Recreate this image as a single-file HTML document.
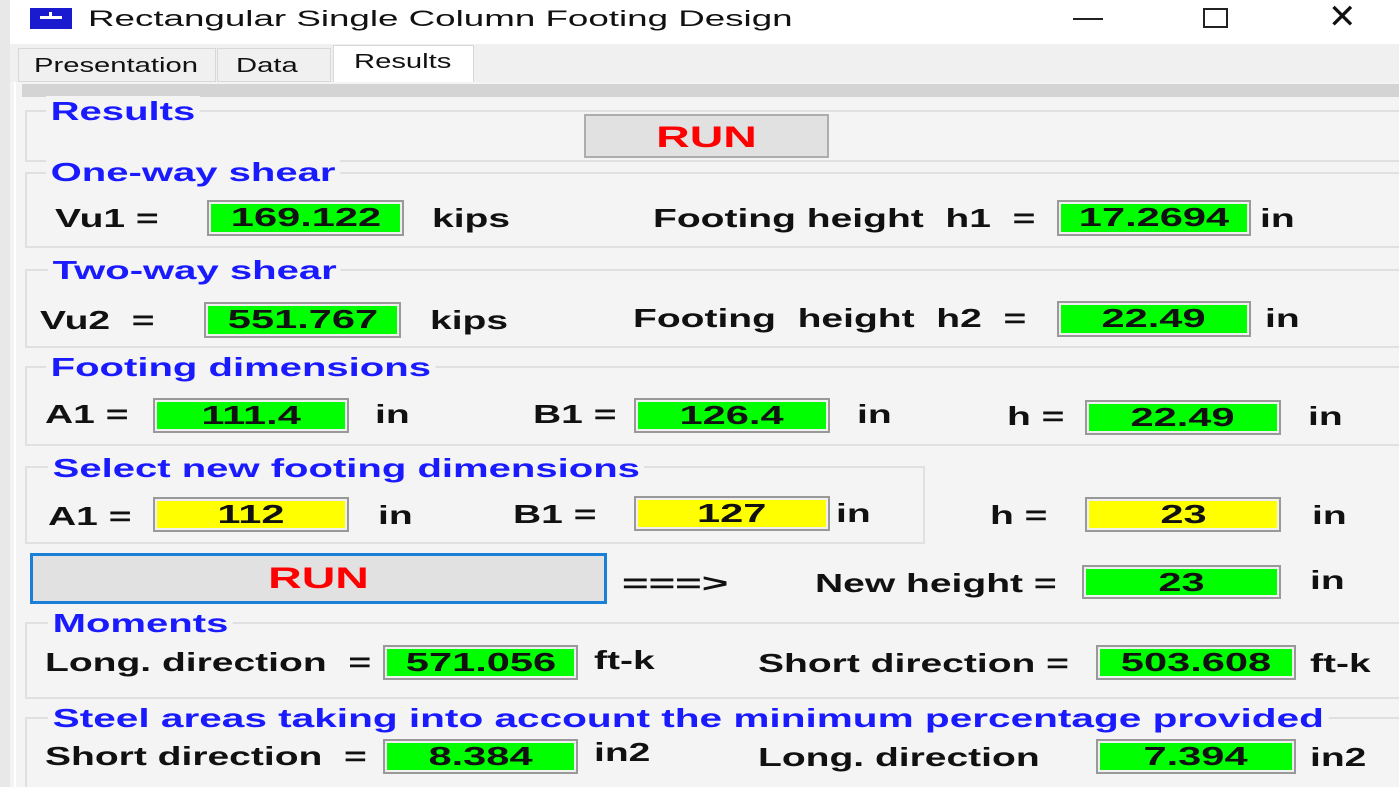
<!DOCTYPE html>
<html><head><meta charset="utf-8"><style>
*{margin:0;padding:0;box-sizing:border-box}
html,body{width:1399px;height:787px;overflow:hidden}
body{background:#f4f4f4;font-family:"Liberation Sans",Arial,sans-serif;position:relative}
.a{position:absolute}
.t{position:absolute;white-space:nowrap;font-weight:bold;font-size:26px;line-height:30px;transform-origin:left center;transform:scaleX(1.5);color:#111}
.h{color:#1a1aff;background:#f4f4f4;padding:0 3px;transform:scaleX(1.54)}
.g{position:absolute;border:2px solid #e0e0e0;}
.b{position:absolute;border:2px solid #999;box-shadow:inset 0 0 0 2px #f0f0f0;background:#00ff00;text-align:center;font-weight:bold;font-size:26px;line-height:31px;color:#111;overflow:hidden}
.b span{display:inline-block;transform:scaleX(1.6)}
.y{background:#ffff00}
</style></head><body>
<div class="a" style="left:0;top:0;width:1399px;height:44px;background:#fff"></div>
<div class="a" style="left:0;top:0;width:10px;height:787px;background:#e8e8e8"></div>
<div class="a" style="left:30px;top:8px;width:42px;height:21px;background:#1a1acf"></div>
<div class="a" style="left:40px;top:16px;width:22px;height:3px;background:#fff"></div>
<div class="a" style="left:49px;top:12px;width:3px;height:6px;background:#fff"></div>
<div class="t" style="left:88px;top:4px;font-weight:normal;font-size:22px;transform:scaleX(1.67);color:#111">Rectangular Single Column Footing Design</div>
<div class="a" style="left:1073px;top:18px;width:30px;height:2px;background:#222"></div>
<div class="a" style="left:1203px;top:8px;width:25px;height:20px;border:2px solid #222"></div>
<div class="t" style="left:1328px;top:2px;font-weight:normal;font-size:34px;transform:none">✕</div>
<div class="a" style="left:10px;top:44px;width:1389px;height:38px;background:#f0f0f0"></div>
<div class="a" style="left:18px;top:48px;width:198px;height:34px;border:1px solid #d8d8d8;background:#f0f0f0"></div>
<div class="a" style="left:217px;top:48px;width:114px;height:34px;border:1px solid #d8d8d8;background:#f0f0f0"></div>
<div class="a" style="left:333px;top:45px;width:141px;height:38px;border:1px solid #d8d8d8;border-bottom:none;background:#fff"></div>
<div class="t" style="left:34px;top:51px;font-weight:normal;font-size:20px;transform:scaleX(1.46)">Presentation</div>
<div class="t" style="left:236px;top:51px;font-weight:normal;font-size:20px;transform:scaleX(1.46)">Data</div>
<div class="t" style="left:354px;top:47px;font-weight:normal;font-size:20px;transform:scaleX(1.46)">Results</div>
<div class="a" style="left:14px;top:82px;width:1385px;height:705px;background:#f4f4f4;border-left:2px solid #fff"></div>
<div class="a" style="left:22px;top:84px;width:1377px;height:13px;background:#d4d4d4"></div>

<div class="g" style="left:25px;top:110px;width:1380px;height:52px"></div>
<div class="g" style="left:25px;top:172px;width:1380px;height:76px"></div>
<div class="g" style="left:25px;top:269px;width:1380px;height:79px"></div>
<div class="g" style="left:25px;top:366px;width:1380px;height:80px"></div>
<div class="g" style="left:25px;top:466px;width:900px;height:78px"></div>
<div class="g" style="left:25px;top:622px;width:1380px;height:77px"></div>
<div class="g" style="left:25px;top:717px;width:1380px;height:80px"></div>

<div class="t h" style="left:46px;top:96px">Results</div>
<div class="a" style="left:584px;top:114px;width:245px;height:44px;background:#e1e1e1;border:2px solid #adadad;text-align:center;color:#f00;font-weight:bold;font-size:30px;line-height:44px"><span style="display:inline-block;transform:scaleX(1.55)">RUN</span></div>

<div class="t h" style="left:46px;top:157px">One-way shear</div>
<div class="t" style="left:55px;top:203px">Vu1 =</div>
<div class="b" style="left:207px;top:200px;width:197px;height:36px"><span>169.122</span></div>
<div class="t" style="left:432px;top:203px">kips</div>
<div class="t" style="left:653px;top:203px">Footing height&nbsp; h1 &nbsp;=</div>
<div class="b" style="left:1057px;top:200px;width:194px;height:36px"><span>17.2694</span></div>
<div class="t" style="left:1260px;top:203px">in</div>

<div class="t h" style="left:48px;top:255px">Two-way shear</div>
<div class="t" style="left:40px;top:305px">Vu2&nbsp; =</div>
<div class="b" style="left:204px;top:302px;width:197px;height:36px"><span>551.767</span></div>
<div class="t" style="left:430px;top:305px">kips</div>
<div class="t" style="left:633px;top:303px">Footing&nbsp; height&nbsp; h2&nbsp; =</div>
<div class="b" style="left:1057px;top:301px;width:194px;height:36px"><span>22.49</span></div>
<div class="t" style="left:1265px;top:303px">in</div>

<div class="t h" style="left:46px;top:352px">Footing dimensions</div>
<div class="t" style="left:45px;top:399px">A1 =</div>
<div class="b" style="left:153px;top:398px;width:196px;height:35px"><span>111.4</span></div>
<div class="t" style="left:375px;top:399px">in</div>
<div class="t" style="left:533px;top:399px">B1 =</div>
<div class="b" style="left:634px;top:398px;width:196px;height:35px"><span>126.4</span></div>
<div class="t" style="left:857px;top:399px">in</div>
<div class="t" style="left:1007px;top:401px">h =</div>
<div class="b" style="left:1085px;top:400px;width:196px;height:35px"><span>22.49</span></div>
<div class="t" style="left:1308px;top:401px">in</div>

<div class="t h" style="left:48px;top:453px">Select new footing dimensions</div>
<div class="t" style="left:48px;top:501px">A1 =</div>
<div class="b y" style="left:153px;top:497px;width:196px;height:35px"><span>112</span></div>
<div class="t" style="left:378px;top:500px">in</div>
<div class="t" style="left:513px;top:499px">B1 =</div>
<div class="b y" style="left:634px;top:496px;width:196px;height:35px"><span>127</span></div>
<div class="t" style="left:836px;top:498px">in</div>
<div class="t" style="left:990px;top:500px">h =</div>
<div class="b y" style="left:1085px;top:497px;width:196px;height:35px"><span>23</span></div>
<div class="t" style="left:1312px;top:500px">in</div>

<div class="a" style="left:30px;top:553px;width:577px;height:51px;background:#e1e1e1;border:3px solid #1a7fd6;text-align:center;color:#f00;font-weight:bold;font-size:30px;line-height:45px"><span style="display:inline-block;transform:scaleX(1.55)">RUN</span></div>
<div class="t" style="left:622px;top:568px;transform:scaleX(1.75)">===&gt;</div>
<div class="t" style="left:815px;top:568px">New height =</div>
<div class="b" style="left:1082px;top:565px;width:199px;height:34px"><span>23</span></div>
<div class="t" style="left:1310px;top:565px">in</div>

<div class="t h" style="left:48px;top:608px">Moments</div>
<div class="t" style="left:45px;top:647px">Long. direction&nbsp; =</div>
<div class="b" style="left:383px;top:645px;width:195px;height:35px"><span>571.056</span></div>
<div class="t" style="left:594px;top:645px">ft-k</div>
<div class="t" style="left:758px;top:648px">Short direction =</div>
<div class="b" style="left:1096px;top:645px;width:200px;height:35px"><span>503.608</span></div>
<div class="t" style="left:1310px;top:648px">ft-k</div>

<div class="t h" style="left:48px;top:703px;transform:scaleX(1.56)">Steel areas taking into account the minimum percentage provided</div>
<div class="t" style="left:45px;top:741px">Short direction&nbsp; =</div>
<div class="b" style="left:383px;top:739px;width:195px;height:35px"><span>8.384</span></div>
<div class="t" style="left:594px;top:737px">in2</div>
<div class="t" style="left:758px;top:742px">Long. direction</div>
<div class="b" style="left:1096px;top:739px;width:200px;height:35px"><span>7.394</span></div>
<div class="t" style="left:1310px;top:742px">in2</div>
</body></html>
